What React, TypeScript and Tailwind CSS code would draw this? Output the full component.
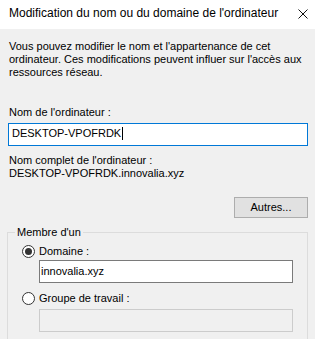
import React from 'react';

function Radio({ checked }: { checked?: boolean }) {
  return (
    <span className="flex h-[13px] w-[13px] shrink-0 items-center justify-center rounded-full border border-[#333333] bg-white">
      {checked && <span className="h-[7px] w-[7px] rounded-full bg-[#333333]" />}
    </span>
  );
}

export default function App() {
  return (
    <div
      className="h-[339px] w-[315px] overflow-hidden bg-[#f0f0f0] text-[11px] leading-[13px] text-black"
      style={{ fontFamily: '"Liberation Sans", Arial, sans-serif' }}
    >
      {/* Title bar */}
      <div className="flex h-[29px] items-start justify-between bg-white pl-[9px] pr-[7px]">
        <span className="pt-[6px] text-[12px] leading-[14px] whitespace-nowrap">
          Modification du nom ou du domaine de l&apos;ordinateur
        </span>
        <svg className="mt-[9px]" width="10" height="10" viewBox="0 0 10 10">
          <path d="M0.5 0.5 L9.5 9.5 M9.5 0.5 L0.5 9.5" stroke="#111" strokeWidth="1" />
        </svg>
      </div>

      <div className="pl-[8px] pr-[7px]">
        <p className="mt-[11px] pl-[1px] whitespace-nowrap">
          Vous pouvez modifier le nom et l&apos;appartenance de cet
          <br />
          ordinateur. Ces modifications peuvent influer sur l&apos;accès aux
          <br />
          ressources réseau.
        </p>

        <div className="mt-[27px] pl-[1px]">Nom de l&apos;ordinateur :</div>
        <div className="mt-[4px] flex h-[23px] items-start border border-[#0078d7] bg-white pl-[3px] pt-[3px]">
          <span>DESKTOP-VPOFRDK</span>
          <span className="ml-px h-[13px] w-px bg-black" />
        </div>

        <div className="mt-[8px] pl-[1px]">Nom complet de l&apos;ordinateur :</div>
        <div className="pl-[1px]">DESKTOP-VPOFRDK.innovalia.xyz</div>

        <div className="mt-[17px] flex justify-end">
          <button className="flex h-[21px] w-[74px] items-center justify-center border border-[#adadad] bg-[#e1e1e1]">
            Autres...
          </button>
        </div>

        {/* Membre d'un */}
        <fieldset className="-ml-px mt-[8px] h-[140px] border border-[#dcdcdc] pt-[6px]">
          <legend className="ml-[7px] px-[2px]">Membre d&apos;un</legend>
          <label className="ml-[14px] flex items-center gap-[4px]">
            <Radio checked />
            <span>Domaine :</span>
          </label>
          <div className="ml-[31px] mt-[2px] h-[23px] w-[254px] border border-[#7a7a7a] bg-white pl-[1px] pt-[4px]">
            innovalia.xyz
          </div>

          <label className="ml-[14px] mt-[9px] flex items-center gap-[4px]">
            <Radio />
            <span>Groupe de travail :</span>
          </label>
          <div className="ml-[31px] mt-[4px] h-[23px] w-[254px] border border-[#cccccc] bg-[#f0f0f0]" />
        </fieldset>
      </div>
    </div>
  );
}
